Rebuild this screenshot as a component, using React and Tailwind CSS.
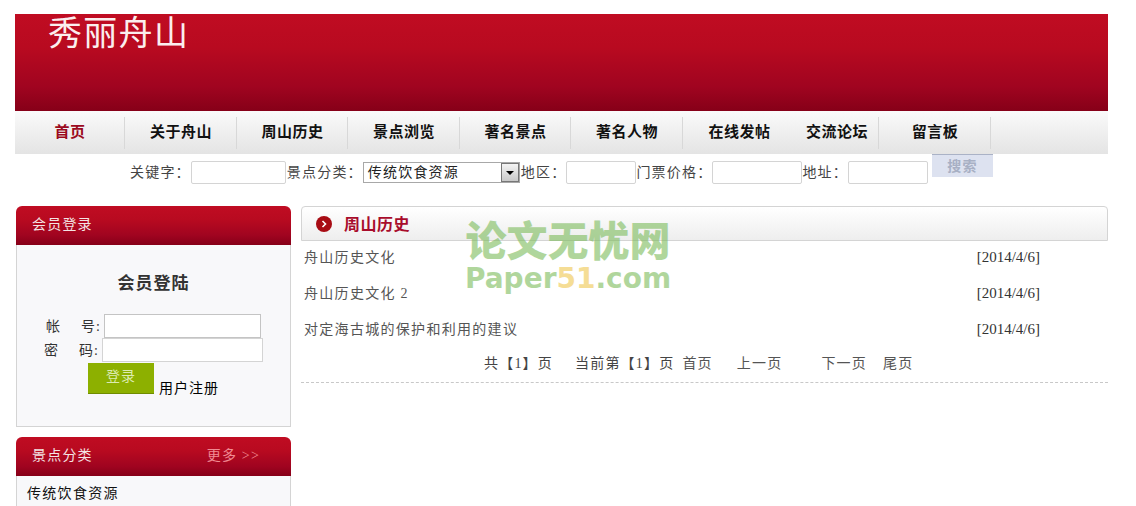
const FONT = "font-['Liberation_Serif','Noto_Sans_CJK_SC',serif]";
const HEAD_BG = "bg-[linear-gradient(#c00c22_0%,#b80a20_35%,#a00420_75%,#860018_100%)]";

const NAV_ITEMS = [
  { label: "首页", width: "w-[110px]", active: true, line: true },
  { label: "关于舟山", width: "w-[112px]", line: true },
  { label: "周山历史", width: "w-[111px]", line: true },
  { label: "景点浏览", width: "w-[112px]", line: true },
  { label: "著名景点", width: "w-[111px]", line: true },
  { label: "著名人物", width: "w-[112px]", line: true },
  { label: "在线发帖", width: "w-[112px]" },
  { label: "交流论坛", width: "w-[84px]", line: true },
  { label: "留言板", width: "w-[112px]", line: true },
];

const ARTICLES = [
  { title: "舟山历史文化", date: "[2014/4/6]" },
  { title: "舟山历史文化 2", date: "[2014/4/6]" },
  { title: "对定海古城的保护和利用的建议", date: "[2014/4/6]" },
];

function Nav() {
  return (
    <div className="flex h-[43px] items-center bg-[linear-gradient(#fafafa,#e4e4e4)]">
      {NAV_ITEMS.map((item) => (
        <div
          key={item.label}
          className={`flex h-[32px] items-center justify-center pl-px text-[15px] font-bold tracking-[0.5px] ${item.width} ${item.active ? "text-[#9b0a20]" : "text-[#111]"} ${item.line ? "border-r border-[#d8d8d8]" : ""}`}
        >
          {item.label}
        </div>
      ))}
    </div>
  );
}

function SearchInput({ width }) {
  return <input className={`h-[23px] rounded-[2px] border border-[#d4d4d4] bg-white ${width}`} />;
}

function SearchBar() {
  return (
    <div className="flex h-[52px] items-start pl-[115px] text-[14px] tracking-[1.2px] text-[#444]">
      <div className="mt-[7px] flex items-center">
        <span>关键字：</span>
        <SearchInput width="w-[95px] mr-px" />
        <span>景点分类：</span>
        <div className="flex h-[21px] w-[157px] items-center justify-between border border-[#a8a8a8] bg-white pl-[4px] text-[#222]">
          <span>传统饮食资源</span>
          <span className="flex h-[19px] w-[18px] items-center justify-center border border-[#777] bg-[linear-gradient(#f4f4f4,#c8c8c8)]">
            <span className="h-0 w-0 border-x-[4px] border-t-[4px] border-x-transparent border-t-black" />
          </span>
        </div>
        <span className="ml-px">地区：</span>
        <SearchInput width="w-[70px]" />
        <span>门票价格：</span>
        <SearchInput width="w-[90px]" />
        <span>地址：</span>
        <SearchInput width="w-[80px]" />
      </div>
      <div className="ml-[4px] flex h-[23px] w-[61px] items-center justify-center border-t border-[#aab2c6] bg-[#dde2f0] text-[14px] font-bold text-[#a8b0c4]">
        搜索
      </div>
    </div>
  );
}

function SideHead({ title, more }) {
  return (
    <div className={`flex h-[39px] items-center justify-between rounded-t-[6px] pb-[2px] pl-[16px] pr-[31px] text-[14px] tracking-[1.2px] text-[#f4e4e4] ${HEAD_BG}`}>
      <span>{title}</span>
      {more && <span className="text-[#f08a92]">{more}</span>}
    </div>
  );
}

function LoginBox() {
  return (
    <div>
      <SideHead title="会员登录" />
      <div className="h-[182px] border-x border-b border-[#d4d4d4] bg-[#f8f8fa] pt-[27px] text-[14px] tracking-[1px] text-[#333]">
        <div className="text-center text-[17px] font-bold leading-[24px] tracking-[1px] text-[#333]">会员登陆</div>
        <div className="mt-[18px] flex h-[24px] items-center pl-[29px]">
          <span className="w-[35px]">帐</span>
          <span className="w-[23px]">号:</span>
          <input className="h-[24px] w-[157px] border border-[#c4c4c4] bg-white" />
        </div>
        <div className="flex h-[24px] items-center pl-[27px]">
          <span className="w-[35px]">密</span>
          <span className="w-[23px]">码:</span>
          <input className="h-[24px] w-[161px] border border-[#d4d4d4] bg-white" />
        </div>
        <div className="mt-px flex items-end pl-[71px]">
          <div className="flex h-[31px] w-[66px] items-start justify-center border-b border-[#6f8c00] bg-[#8db000] pt-[3px] text-[#dcebb0]">登录</div>
          <span className="ml-[5px] -mb-[5px] text-black">用户注册</span>
        </div>
      </div>
    </div>
  );
}

function CategoryBox() {
  return (
    <div className="mt-[10px]">
      <SideHead title="景点分类" more="更多 >>" />
      <div className="h-[60px] border-x border-[#d4d4d4] bg-[#f8f8fa] pl-[10px] pt-[7px] text-[14px] tracking-[1.3px] text-[#111]">
        传统饮食资源
      </div>
    </div>
  );
}

function Watermark() {
  return (
    <div className="pointer-events-none absolute left-[164px] top-[10px] flex w-[206px] flex-col items-center leading-none opacity-60">
      <div className="whitespace-nowrap text-[41px] font-black leading-[44px] text-[#7cbc5c] [font-family:'Noto_Sans_CJK_SC',sans-serif]">论文无忧网</div>
      <div className="mt-[5px] whitespace-nowrap text-[28px] font-bold text-[#7cbc5c] [font-family:'DejaVu_Sans',sans-serif]">
        Paper<span className="text-[#f0c850]">51</span>.com
      </div>
    </div>
  );
}

function MainPanel() {
  return (
    <div className="relative ml-[10px] w-[807px]">
      <div className="flex h-[35px] items-center rounded-t-[4px] border border-[#d4d4d4] bg-[linear-gradient(#ffffff,#eeeeee)] pl-[14px]">
        <span className="flex h-[16px] w-[16px] items-center justify-center rounded-full bg-[#a80c14]">
          <svg width="6" height="8" viewBox="0 0 6 8" fill="none" stroke="#fff" strokeWidth="1.6">
            <path d="M1.5 1l3 3-3 3" />
          </svg>
        </span>
        <span className="ml-[12px] pt-[2px] text-[16px] font-bold tracking-[0.5px] text-[#a80c2c]">周山历史</span>
      </div>
      <div className="-mt-[2px] text-[14px] tracking-[1.3px] text-[#555]">
        {ARTICLES.map((a) => (
          <div key={a.title} className="flex h-[36px] items-center justify-between pl-[3px] pr-[68px]">
            <span>{a.title}</span>
            <span className="text-[15px] tracking-normal text-[#333]">{a.date}</span>
          </div>
        ))}
      </div>
      <div className="flex h-[36px] items-center border-b border-dashed border-[#c8c8c8] pb-[2px] pl-[183px] text-[14px] tracking-[1.2px] text-[#444]">
        <span>共【1】页</span>
        <span className="ml-[22px]">当前第【1】页</span>
        <span className="ml-[8px] text-[#555]">首页</span>
        <span className="ml-[24px] text-[#555]">上一页</span>
        <span className="ml-[39px] text-[#555]">下一页</span>
        <span className="ml-[16px] text-[#555]">尾页</span>
      </div>
      <Watermark />
    </div>
  );
}

export default function App() {
  return (
    <div className={`h-[506px] w-[1136px] overflow-hidden bg-white pl-[15px] pt-[14px] ${FONT}`}>
      <div className="w-[1093px]">
        <div className={`h-[97px] pl-[33px] pt-[1px] text-[34px] leading-[38px] tracking-[1.3px] text-[#fbeeee] ${HEAD_BG}`}>
          秀丽舟山
        </div>
        <Nav />
        <SearchBar />
        <div className="flex pl-px">
          <div className="w-[275px]">
            <LoginBox />
            <CategoryBox />
          </div>
          <MainPanel />
        </div>
      </div>
    </div>
  );
}
